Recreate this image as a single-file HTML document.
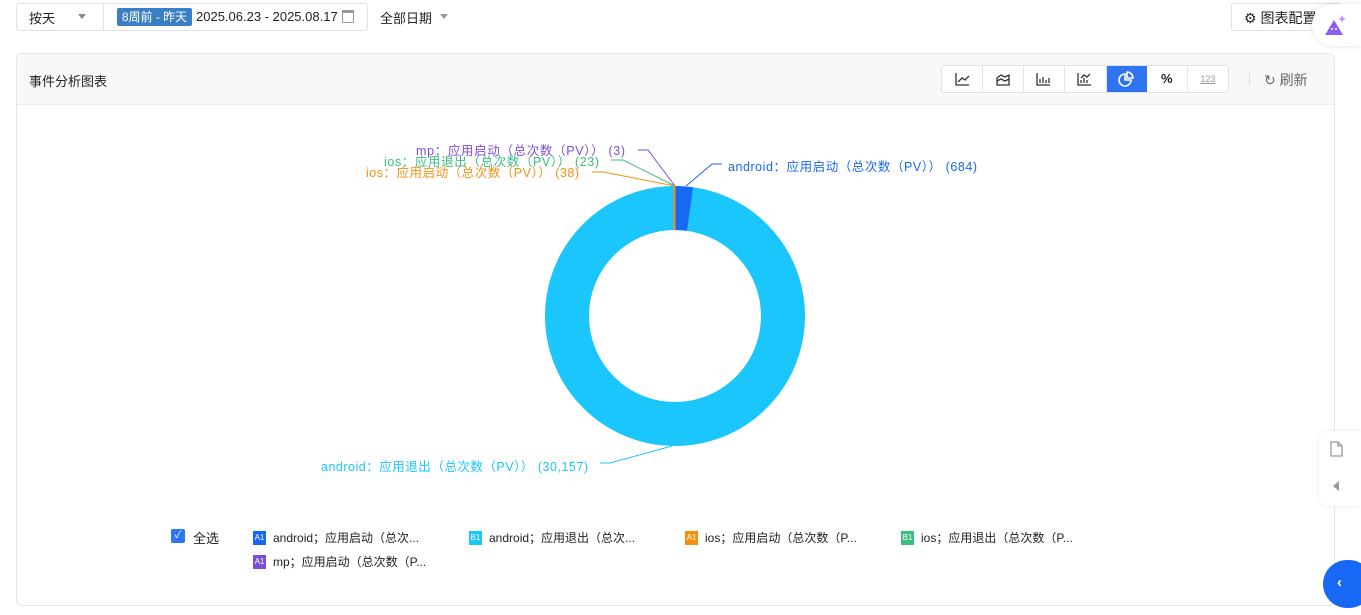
<!DOCTYPE html>
<html><head><meta charset="utf-8"><style>
*{box-sizing:border-box;margin:0;padding:0}
body{width:1361px;height:615px;overflow:hidden;background:#fff;font-family:"Liberation Sans","Noto Sans CJK SC",sans-serif;color:#222;position:relative;font-size:13px}
.a{position:absolute}
</style></head><body>
<div class="a" style="left:16px;top:3px;width:352px;height:28px;border:1px solid #dfe1e6;border-radius:3px"></div>
<div class="a" style="left:103px;top:4px;width:1px;height:26px;background:#dfe1e6"></div>
<div class="a" style="left:29px;top:8px;font-size:13px">按天</div>
<div class="a" style="left:78px;top:14px;border:4px solid transparent;border-top:5px solid #888"></div>
<div class="a" style="left:117px;top:8px;width:75px;height:18px;background:#3a7fc6;border-radius:2px;color:#fff;font-size:12px;line-height:18px;text-align:center">8周前 - 昨天</div>
<div class="a" style="left:196px;top:9px;font-size:13px">2025.06.23 - 2025.08.17</div>
<div class="a" style="left:342px;top:10px;width:12px;height:13px;border:1px solid #999;border-top:3px solid #999;border-radius:1px"></div>
<div class="a" style="left:380px;top:8px;font-size:13px">全部日期</div>
<div class="a" style="left:440px;top:14px;border:4px solid transparent;border-top:5px solid #999"></div>

<div class="a" style="left:1231px;top:3px;width:110px;height:28px;border:1px solid #dfe1e6;border-radius:3px"></div>
<div class="a" style="left:1244px;top:8px;font-size:14px">⚙ 图表配置</div>
<div class="a" style="left:1312px;top:4px;width:49px;height:42px;background:#fff;border-radius:22px 0 0 22px;box-shadow:0 0 6px rgba(0,0,0,.12)"></div>
<svg class="a" style="left:1322px;top:12px" width="26" height="26"><path d="M3 23 L12 8 L21 23 Z" fill="#8b5cf6"/><circle cx="10" cy="17" r="1" fill="#fff"/><circle cx="14" cy="17" r="1" fill="#fff"/><path d="M20 3 l1 3 3 1 -3 1 -1 3 -1-3 -3-1 3-1z" fill="#c084fc"/></svg>

<div class="a" style="left:16px;top:53px;width:1319px;height:553px;border:1px solid #e3e5ea;border-radius:6px;overflow:hidden">
<div style="height:51px;background:#f7f8fa;border-bottom:1px solid #ebedf0"></div>
</div>
<div class="a" style="left:29px;top:71px;font-size:13px">事件分析图表</div>
<div class="a" style="left:941px;top:65px;width:288px;height:28px;border:1px solid #dfe1e6;border-radius:3px;background:#fff;display:flex">
<div style="flex:1;border-right:1px solid #e3e5ea"></div>
<div style="flex:1;border-right:1px solid #e3e5ea"></div>
<div style="flex:1;border-right:1px solid #e3e5ea"></div>
<div style="flex:1;border-right:1px solid #e3e5ea"></div>
<div style="flex:1;background:#2f74f0"></div>
<div style="flex:1;border-right:1px solid #e3e5ea;text-align:center;line-height:26px;font-weight:bold">%</div>
<div style="flex:1;text-align:center;line-height:26px;font-size:9px;color:#999;text-decoration:underline">123</div>
</div>
<svg class="a" style="left:941px;top:65px" width="200" height="28" fill="none" stroke="#333" stroke-width="1.3">
<path d="M15 8v12h13M17 17l4-4 3 2 4-4"/>
<path d="M56 20h12v-10l-4 2-4-2-4 3z M56 16l4-2 4 2 4-2"/>
<path d="M96 8v12h13M99 18v-4M102 18v-6M105 18v-3M108 18v-5"/>
<path d="M137 8v12h13M140 18v-3M143 18v-5M146 18v-3M140 13l3-3 3 2 3-3"/>
<g stroke="#fff" stroke-width="1.6"><path d="M184 9a6 6 0 1 0 6 6h-6z"/><path d="M186 7a6 6 0 0 1 6 6h-6z"/></g>
</svg>
<div class="a" style="left:1249px;top:72px;width:1px;height:14px;background:#ddd"></div>
<div class="a" style="left:1264px;top:70px;font-size:14px;color:#666">↻ 刷新</div>

<svg class="a" style="left:0;top:0" width="1361" height="615" font-family="Liberation Sans,Noto Sans CJK SC,sans-serif" font-size="12.5" xml:space="preserve">
<circle cx="675" cy="316" r="108" fill="none" stroke="#1bc6fc" stroke-width="44"/>
<path d="M675 186 A130 130 0 0 1 693 187.3 L687 230.8 A86 86 0 0 0 675 230 Z" fill="#1768f5"/>
<rect x="673.5" y="186" width="2" height="44" fill="#f5900f"/>
<polyline points="686,186 712,164 722,164" fill="none" stroke="#1768f5"/>
<polyline points="675,186 648,150 638,150" fill="none" stroke="#7c4ddb"/>
<polyline points="675,186 623,160 611,160" fill="none" stroke="#3bbd7c"/>
<polyline points="675,186 603,172 592,172" fill="none" stroke="#f5900f"/>
<polyline points="672,446 610,463 600,463" fill="none" stroke="#1bc6fc"/>
<text x="728" y="171" fill="#1768f5" textLength="249">android：应用启动（总次数（PV））    (684)</text>
<text x="416" y="155" fill="#7c4ddb" textLength="209">mp：应用启动（总次数（PV））    (3)</text>
<text x="384" y="166" fill="#3bbd7c" textLength="215">ios：应用退出（总次数（PV））    (23)</text>
<text x="366" y="177" fill="#f5900f" textLength="213">ios：应用启动（总次数（PV））    (38)</text>
<text x="321" y="471" fill="#1bc6fc" textLength="267">android：应用退出（总次数（PV））    (30,157)</text>
</svg>

<div class="a" style="left:171px;top:529px;width:14px;height:14px;background:#2f74f0;border-radius:2px;color:#fff;font-size:10px;line-height:14px;text-align:center">✓</div>
<div class="a" style="left:193px;top:528px;font-size:13px">全选</div>
<div class="a" style="left:253px;top:531px;font-size:12px;line-height:14px"><span style="display:inline-block;width:13px;height:14px;background:#1768f5;color:#fff;font-size:8px;text-align:center;vertical-align:top;margin-right:7px">A1</span>android；应用启动（总次...</div>
<div class="a" style="left:469px;top:531px;font-size:12px;line-height:14px"><span style="display:inline-block;width:13px;height:14px;background:#1bc6fc;color:#fff;font-size:8px;text-align:center;vertical-align:top;margin-right:7px">B1</span>android；应用退出（总次...</div>
<div class="a" style="left:685px;top:531px;font-size:12px;line-height:14px"><span style="display:inline-block;width:13px;height:14px;background:#f5900f;color:#fff;font-size:8px;text-align:center;vertical-align:top;margin-right:7px">A1</span>ios；应用启动（总次数（P...</div>
<div class="a" style="left:901px;top:531px;font-size:12px;line-height:14px"><span style="display:inline-block;width:13px;height:14px;background:#3bbd7c;color:#fff;font-size:8px;text-align:center;vertical-align:top;margin-right:7px">B1</span>ios；应用退出（总次数（P...</div>
<div class="a" style="left:253px;top:555px;font-size:12px;line-height:14px"><span style="display:inline-block;width:13px;height:14px;background:#7c4ddb;color:#fff;font-size:8px;text-align:center;vertical-align:top;margin-right:7px">A1</span>mp；应用启动（总次数（P...</div>

<div class="a" style="left:1319px;top:431px;width:42px;height:75px;background:#fff;border-radius:8px 0 0 8px;box-shadow:0 0 5px rgba(0,0,0,.1)"></div>
<svg class="a" style="left:1329px;top:441px" width="16" height="60" fill="none" stroke="#999" stroke-width="1.3"><path d="M2 1h7l4 4v10H2z"/><path d="M9 1v4h4"/><path d="M4 45l6-5v10z" fill="#999" stroke="none"/></svg>
<div class="a" style="left:1323px;top:560px;width:50px;height:48px;background:#1768f5;border-radius:24px;color:#fff;font-size:15px;font-weight:bold;line-height:46px;padding-left:14px">‹</div>
</body></html>
